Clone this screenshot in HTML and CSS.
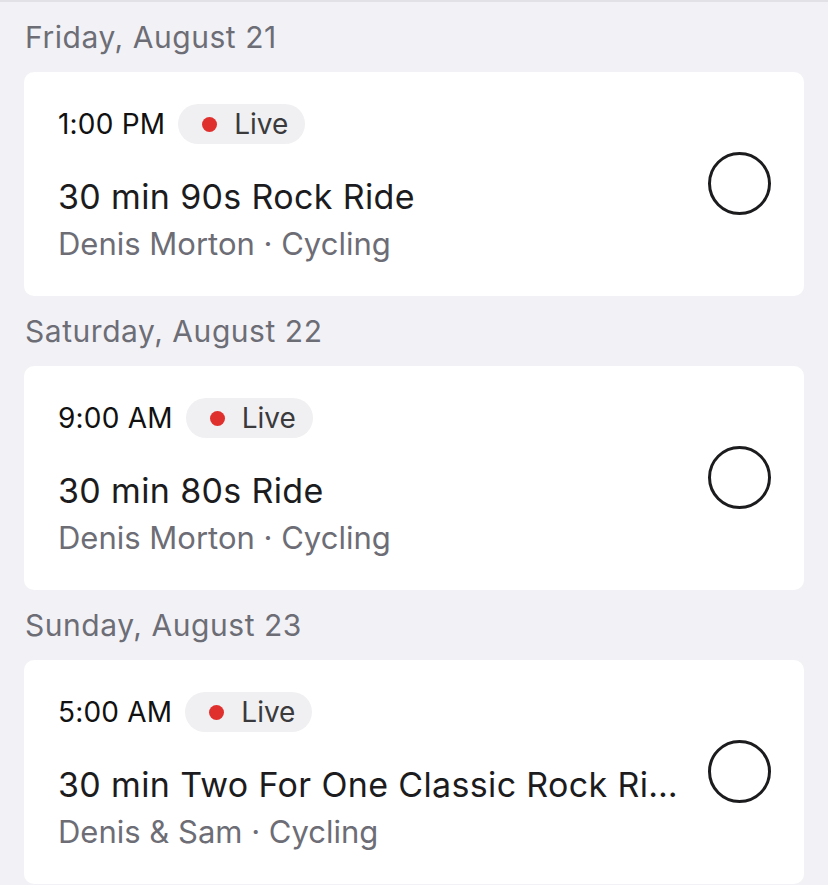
FILE: index.html
```html
<!DOCTYPE html>
<html lang="en">
<head>
    <meta charset="UTF-8">
    <meta name="viewport" content="width=device-width, initial-scale=1.0">
    <title>Schedule</title>
    <link rel="stylesheet" href="styles.css">
</head>
<body>

<div class="schedule">
    <!-- Friday -->
    <section class="day">
        <h2 class="day-title">Friday, August 21</h2>
        <div class="class-card">
            <div class="class-info">
                <div class="class-meta">
                    <span class="class-time">1:00 PM</span>
                    <span class="live-pill"><span class="live-dot"></span>Live</span>
                </div>
                <div class="class-name">30 min 90s Rock Ride</div>
                <div class="class-sub">Denis Morton · Cycling</div>
            </div>
            <span class="check-circle"></span>
        </div>
    </section>

    <!-- Saturday -->
    <section class="day">
        <h2 class="day-title">Saturday, August 22</h2>
        <div class="class-card">
            <div class="class-info">
                <div class="class-meta">
                    <span class="class-time">9:00 AM</span>
                    <span class="live-pill"><span class="live-dot"></span>Live</span>
                </div>
                <div class="class-name">30 min 80s Ride</div>
                <div class="class-sub">Denis Morton · Cycling</div>
            </div>
            <span class="check-circle"></span>
        </div>
    </section>

    <!-- Sunday -->
    <section class="day">
        <h2 class="day-title">Sunday, August 23</h2>
        <div class="class-card">
            <div class="class-info">
                <div class="class-meta">
                    <span class="class-time">5:00 AM</span>
                    <span class="live-pill"><span class="live-dot"></span>Live</span>
                </div>
                <div class="class-name">30 min Two For One Classic Rock Ride</div>
                <div class="class-sub">Denis &amp; Sam · Cycling</div>
            </div>
            <span class="check-circle"></span>
        </div>
    </section>
</div>

</body>
</html>
```

FILE: styles.css
```css
/* General */
body {
    font-family: Inter, "Noto Sans", sans-serif;
    margin: 0;
    padding: 0;
    background-color: #f2f2f6;
    color: #1c1c1e;
}

.schedule {
    border-top: 2px solid #e2e2e6;
    padding: 0 24px;
}

/* Day header */
.day-title {
    font-size: 30px;
    font-weight: 400;
    letter-spacing: 0.55px;
    color: #6d6d76;
    margin: 0;
    padding: 20px 0 20px 1px;
    line-height: 30px;
}

/* Card */
.class-card {
    background: #fff;
    border-radius: 10px;
    display: flex;
    align-items: flex-start;
    box-sizing: border-box;
    height: 224px;
    padding: 32px 33px 0 34px;
}
.class-info {
    flex: 1;
    min-width: 0;
    padding-right: 26px;
}
.class-meta {
    display: flex;
    align-items: center;
    gap: 13px;
    height: 40px;
    margin-bottom: 33px;
}
.class-time {
    font-size: 28px;
    letter-spacing: 0.2px;
    color: #111;
}
.live-pill {
    display: inline-flex;
    align-items: center;
    height: 40px;
    padding: 0 17px 0 24px;
    border-radius: 20px;
    background: #f0f0f2;
    font-size: 28px;
    color: #3a3a3c;
}
.live-dot {
    width: 15px;
    height: 15px;
    border-radius: 50%;
    background: #e0302e;
    margin-right: 17px;
}
.class-name {
    font-size: 34px;
    line-height: 40px;
    letter-spacing: 0.35px;
    white-space: nowrap;
    overflow: hidden;
    text-overflow: ellipsis;
}
.class-sub {
    font-size: 31px;
    line-height: 36px;
    color: #6d6d76;
    margin-top: 9px;
}

/* Done circle */
.check-circle {
    box-sizing: border-box;
    width: 63px;
    height: 63px;
    border: 3.5px solid #1c1c1e;
    border-radius: 50%;
    flex-shrink: 0;
    margin-top: 48px;
}
```
